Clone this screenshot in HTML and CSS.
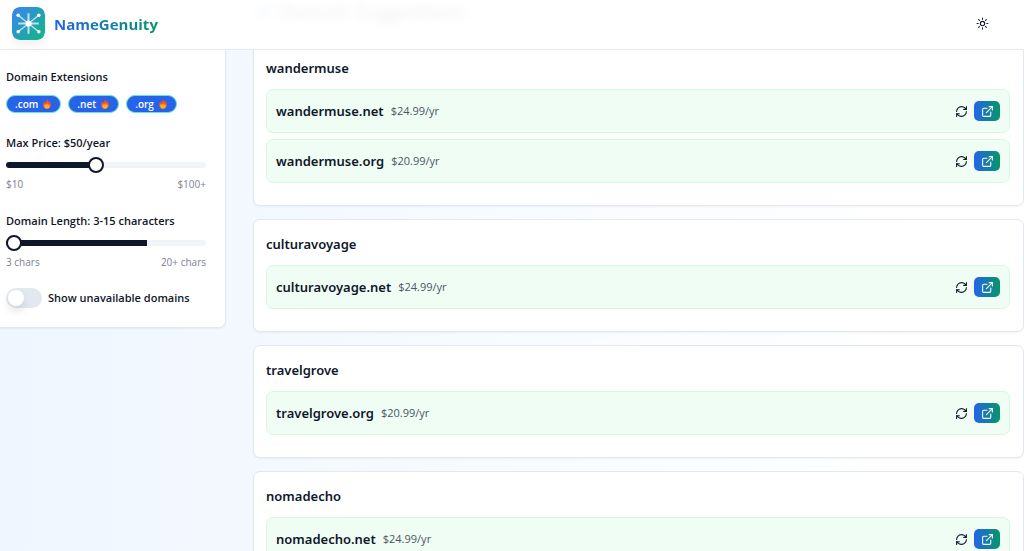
FILE: index.html
```html
<!DOCTYPE html>
<html lang="en">
<head>
    <meta charset="UTF-8">
    <meta name="viewport" content="width=device-width, initial-scale=1.0">
    <title>NameGenuity</title>
    <link rel="stylesheet" href="styles.css">
</head>
<body>
    <!-- Shared icons -->
    <svg class="sprite" aria-hidden="true">
        <symbol id="refresh" viewBox="0 0 24 24">
            <path d="M3 12a9 9 0 0 1 9-9 9.75 9.75 0 0 1 6.74 2.74L21 8"/>
            <path d="M21 3v5h-5"/>
            <path d="M21 12a9 9 0 0 1-9 9 9.75 9.75 0 0 1-6.74-2.74L3 16"/>
            <path d="M8 16H3v5"/>
        </symbol>
        <symbol id="external" viewBox="0 0 24 24">
            <path d="M15 3h6v6"/>
            <path d="M10 14 21 3"/>
            <path d="M18 13v6a2 2 0 0 1-2 2H5a2 2 0 0 1-2-2V8a2 2 0 0 1 2-2h6"/>
        </symbol>
        <symbol id="fire" viewBox="0 0 20 24">
            <path fill="#f4511e" d="M10 0c2 3 3 4 3 7 1-1 2-2 2-4 3 4 5 7 5 11 0 6-4 10-10 10S0 20 0 14c0-4 2-6 4-9 0 2 0 3 1 4 2-3 5-5 5-9z"/>
            <path fill="#ffb02e" d="M11 9c0 3 1 4 2 5 1 0 1-1 2-2 1 2 2 3 2 5 0 4-3 7-7 7s-7-3-7-7c0-2 1-4 2-5 0 1 1 2 2 2 2-1 3-3 4-5z"/>
        </symbol>
    </svg>

    <header class="header">
        <a class="brand" href="#">
            <svg class="logo" viewBox="0 0 32 32" aria-hidden="true">
                <defs>
                    <linearGradient id="logo-bg" x1="0" y1="0" x2="1" y2="1">
                        <stop offset="0" stop-color="#3b82f6"/>
                        <stop offset="1" stop-color="#10b981"/>
                    </linearGradient>
                </defs>
                <rect width="32" height="32" rx="7" fill="url(#logo-bg)"/>
                <g stroke="#fff" stroke-opacity="0.7" stroke-width="2">
                    <path d="M16 6v20M6 16h20"/>
                    <path stroke-width="1.5" d="M6 8l20 16M26 8L6 24"/>
                </g>
                <g fill="#fff">
                    <circle cx="16" cy="16" r="3"/>
                    <circle cx="6" cy="8" r="1.7"/>
                    <circle cx="26" cy="8" r="1.7"/>
                    <circle cx="6" cy="24" r="1.7"/>
                    <circle cx="26" cy="24" r="1.7"/>
                </g>
            </svg>
            <span class="brand-name">NameGenuity</span>
        </a>
        <button class="icon-button" type="button" aria-label="Toggle theme">
            <svg class="icon" viewBox="0 0 24 24">
                <circle cx="12" cy="12" r="4"/>
                <path d="M12 2v2M12 20v2M4.93 4.93l1.41 1.41M17.66 17.66l1.41 1.41M2 12h2M20 12h2M6.34 17.66l-1.41 1.41M19.07 4.93l-1.41 1.41"/>
            </svg>
        </button>
    </header>

    <main class="layout">
        <aside class="filters">
            <section class="filter">
                <h2 class="label">Domain Extensions</h2>
                <div class="badges">
                    <button class="badge" type="button">.com <svg class="fire"><use href="#fire"/></svg></button>
                    <button class="badge" type="button">.net <svg class="fire"><use href="#fire"/></svg></button>
                    <button class="badge" type="button">.org <svg class="fire"><use href="#fire"/></svg></button>
                </div>
            </section>

            <section class="filter">
                <label class="label" for="price">Max Price: $50/year</label>
                <input class="slider" id="price" type="range" min="10" max="100" value="50" style="--fill: 44.4%">
                <div class="scale"><span>$10</span><span>$100+</span></div>
            </section>

            <section class="filter">
                <label class="label" for="length">Domain Length: 3-15 characters</label>
                <input class="slider" id="length" type="range" min="3" max="20" value="3" style="--fill: 70.6%">
                <div class="scale"><span>3 chars</span><span>20+ chars</span></div>
            </section>

            <div class="switch-row">
                <input class="switch" id="unavailable" type="checkbox" role="switch">
                <label class="label" for="unavailable">Show unavailable domains</label>
            </div>
        </aside>

        <section class="results">
            <h1 class="results-title">
                <svg class="icon"><use href="#external"/></svg>
                Domain Suggestions
            </h1>

            <article class="card">
                <h2 class="card-title">wandermuse</h2>
                <div class="domain">
                    <span class="domain-name">wandermuse.net</span>
                    <span class="price">$24.99/yr</span>
                    <button class="icon-button" type="button" aria-label="Check again"><svg class="icon"><use href="#refresh"/></svg></button>
                    <a class="buy" href="#" aria-label="Register wandermuse.net"><svg class="icon"><use href="#external"/></svg></a>
                </div>
                <div class="domain">
                    <span class="domain-name">wandermuse.org</span>
                    <span class="price">$20.99/yr</span>
                    <button class="icon-button" type="button" aria-label="Check again"><svg class="icon"><use href="#refresh"/></svg></button>
                    <a class="buy" href="#" aria-label="Register wandermuse.org"><svg class="icon"><use href="#external"/></svg></a>
                </div>
            </article>

            <article class="card">
                <h2 class="card-title">culturavoyage</h2>
                <div class="domain">
                    <span class="domain-name">culturavoyage.net</span>
                    <span class="price">$24.99/yr</span>
                    <button class="icon-button" type="button" aria-label="Check again"><svg class="icon"><use href="#refresh"/></svg></button>
                    <a class="buy" href="#" aria-label="Register culturavoyage.net"><svg class="icon"><use href="#external"/></svg></a>
                </div>
            </article>

            <article class="card">
                <h2 class="card-title">travelgrove</h2>
                <div class="domain">
                    <span class="domain-name">travelgrove.org</span>
                    <span class="price">$20.99/yr</span>
                    <button class="icon-button" type="button" aria-label="Check again"><svg class="icon"><use href="#refresh"/></svg></button>
                    <a class="buy" href="#" aria-label="Register travelgrove.org"><svg class="icon"><use href="#external"/></svg></a>
                </div>
            </article>

            <article class="card">
                <h2 class="card-title">nomadecho</h2>
                <div class="domain">
                    <span class="domain-name">nomadecho.net</span>
                    <span class="price">$24.99/yr</span>
                    <button class="icon-button" type="button" aria-label="Check again"><svg class="icon"><use href="#refresh"/></svg></button>
                    <a class="buy" href="#" aria-label="Register nomadecho.net"><svg class="icon"><use href="#external"/></svg></a>
                </div>
            </article>
        </section>
    </main>
</body>
</html>
```

FILE: styles.css
```css
* {
    margin: 0;
    padding: 0;
    box-sizing: border-box;
}

html {
    scrollbar-width: none;
}

body {
    min-height: 100vh;
    font-family: 'Segoe UI', 'Open Sans', 'Noto Sans', sans-serif;
    font-size: 11px;
    line-height: 16px;
    color: #0f172a;
    background: linear-gradient(to right, #eff6ff, #ffffff 90%);
}

button {
    border: none;
    background: none;
    font: inherit;
    color: inherit;
    cursor: pointer;
}

a {
    color: inherit;
    text-decoration: none;
}

.sprite {
    display: none;
}

.icon {
    width: 13px;
    height: 13px;
    fill: none;
    stroke: currentColor;
    stroke-width: 2;
    stroke-linecap: round;
    stroke-linejoin: round;
}

/* Header */
.header {
    position: fixed;
    top: 0;
    left: 0;
    right: 0;
    z-index: 10;
    height: 50px;
    padding: 0 29px 3px 12px;
    display: flex;
    align-items: center;
    justify-content: space-between;
    background: rgba(255, 255, 255, 0.95);
    backdrop-filter: blur(4px);
    border-bottom: 1px solid #e5e9ee;
}

.brand {
    display: flex;
    align-items: center;
    gap: 9px;
}

.logo {
    width: 33px;
    height: 33px;
    border-radius: 8px;
    box-shadow: 0 6px 10px rgba(0, 0, 0, 0.05);
}

.brand-name {
    padding-top: 2px;
    font-size: 15px;
    line-height: 24px;
    font-weight: 700;
    color: transparent;
    background: linear-gradient(to right, #2563eb, #059669);
    background-clip: text;
    -webkit-background-clip: text;
}

.icon-button {
    width: 26px;
    height: 20px;
    display: flex;
    align-items: center;
    justify-content: center;
}

/* Layout */
.layout {
    display: grid;
    grid-template-columns: 226px 1fr;
    align-items: start;
    gap: 27px;
}

/* Filters */
.filters {
    padding: 69px 19px 19px 6px;
    display: flex;
    flex-direction: column;
    gap: 18px;
    background: #ffffff;
    border-right: 1px solid #e2e8f0;
    border-bottom: 1px solid #e2e8f0;
    border-bottom-right-radius: 7px;
    box-shadow: 0 1px 2px rgba(0, 0, 0, 0.05);
}

.filter {
    display: flex;
    flex-direction: column;
}

.filter + .filter {
    margin-top: 3px;
}

.label {
    font-size: 11px;
    line-height: 16px;
    font-weight: 600;
}

.badges {
    display: flex;
    gap: 7px;
    margin: 10px 0 1px;
}

.badge {
    height: 18px;
    padding: 0 9px 0 8px;
    display: flex;
    align-items: center;
    gap: 5px;
    font-size: 10px;
    font-weight: 600;
    color: #ffffff;
    background: #2563eb;
    border: 1px solid #6ee7b7;
    border-radius: 9px;
}

.fire {
    width: 8px;
    height: 10px;
}

.slider {
    appearance: none;
    -webkit-appearance: none;
    width: 100%;
    height: 16px;
    margin-top: 6px;
    background: none;
}

.slider::-webkit-slider-runnable-track {
    height: 6px;
    border-radius: 3px;
    background: linear-gradient(to right, #0f172a var(--fill), #f1f5f9 var(--fill));
}

.slider::-webkit-slider-thumb {
    -webkit-appearance: none;
    width: 16px;
    height: 16px;
    margin-top: -5px;
    background: #ffffff;
    border: 2px solid #0f172a;
    border-radius: 50%;
}

.scale {
    display: flex;
    justify-content: space-between;
    margin-top: 3px;
    font-size: 10px;
    color: #7b8190;
}

.switch-row {
    display: flex;
    align-items: center;
    gap: 6px;
}

.switch {
    appearance: none;
    -webkit-appearance: none;
    width: 36px;
    height: 20px;
    padding: 2px;
    background: #e2e8f0;
    border-radius: 10px;
}

.switch::before {
    content: '';
    display: block;
    width: 16px;
    height: 16px;
    background: #ffffff;
    border-radius: 50%;
    box-shadow: 0 6px 10px rgba(0, 0, 0, 0.1);
}

/* Results */
.results {
    display: flex;
    flex-direction: column;
    gap: 13px;
}

.results-title {
    display: flex;
    align-items: center;
    gap: 7px;
    height: 30px;
    padding: 0 0 6px 3px;
    font-size: 19px;
    line-height: 24px;
    font-weight: 600;
}

.results-title .icon {
    width: 16px;
    height: 16px;
    color: #2563eb;
}

.card {
    padding: 12px 13px 22px 12px;
    background: #ffffff;
    border: 1px solid #e2e8f0;
    border-radius: 7px;
    box-shadow: 0 1px 2px rgba(0, 0, 0, 0.05);
}

.card-title,
.domain-name {
    font-family: 'Segoe UI', 'Noto Sans', sans-serif;
    font-size: 13px;
    line-height: 24px;
    font-weight: 600;
}

.card-title {
    margin-bottom: 9px;
}

.domain {
    height: 44px;
    padding: 0 9px;
    display: flex;
    align-items: center;
    background: #f0fdf4;
    border: 1px solid #d3f9df;
    border-radius: 7px;
}

.domain + .domain {
    margin-top: 6px;
}

.price {
    margin-left: 7px;
    margin-right: auto;
    font-size: 11px;
    color: #4b5563;
}

.buy {
    width: 26px;
    height: 20px;
    display: flex;
    align-items: center;
    justify-content: center;
    color: #ffffff;
    background: linear-gradient(to right, #2563eb, #059669);
    border-radius: 5px;
}
```
